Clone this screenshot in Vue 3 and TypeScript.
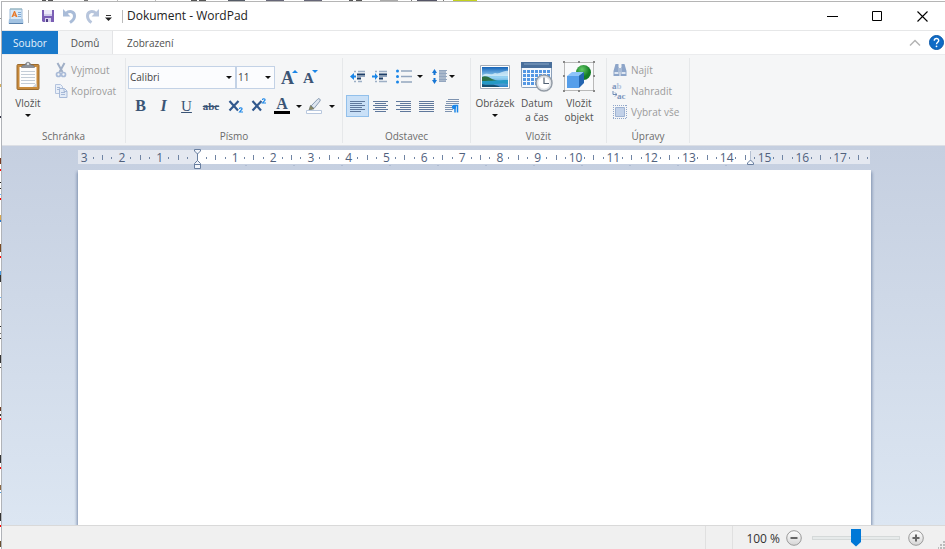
<script setup lang="ts">
import { ref } from 'vue'

interface Mark { x: number; label: string }

const CM = 37.8
const ORIGIN = 119.5
const TAB_STEP = 48

const numbers: Mark[] = []
const dots: number[] = []
const halves: number[] = []
for (let k = -3; k <= 17; k++) {
  const x = ORIGIN + k * CM
  if (k !== 0) numbers.push({ x, label: String(Math.abs(k)) })
  dots.push(x + CM * 0.25, x + CM * 0.75)
  halves.push(x + CM * 0.5)
}
const tabStops = Array.from({ length: 11 }, (_, i) => ORIGIN + (i + 1) * TAB_STEP)

const lines = [0, 1, 2, 3, 4, 5]
type Align = 'left' | 'center' | 'right' | 'justify'
const aligns: { id: Align; title: string; rows: [number, number][] }[] = [
  { id: 'left', title: 'Zarovnat vlevo', rows: [[0, 15], [0, 12], [0, 15], [0, 12], [0, 15], [0, 11]] },
  { id: 'center', title: 'Na střed', rows: [[0, 15], [2, 11], [0, 15], [2, 11], [0, 15], [2, 11]] },
  { id: 'right', title: 'Zarovnat vpravo', rows: [[0, 15], [4, 11], [0, 15], [4, 11], [0, 15], [4, 11]] },
  { id: 'justify', title: 'Do bloku', rows: [[0, 15], [0, 15], [0, 15], [0, 15], [0, 15], [0, 15]] },
]
const align = ref<Align>('left')
const zoom = ref(50)
const fontName = ref('Calibri')
const fontSize = ref('11')
const text = ref('')

const topBits = [
  { x: 42, w: 4, c: '#555' }, { x: 48, w: 5, c: '#555' }, { x: 84, w: 4, c: '#777' },
  { x: 117, w: 1, c: '#bbb' }, { x: 155, w: 1, c: '#bbb' }, { x: 191, w: 6, c: '#555' },
  { x: 199, w: 7, c: '#555' }, { x: 228, w: 17, c: '#555b66' }, { x: 266, w: 18, c: '#667' },
  { x: 304, w: 18, c: '#667' }, { x: 349, w: 4, c: '#555' }, { x: 356, w: 6, c: '#555' },
  { x: 380, w: 18, c: '#aaa' }, { x: 411, w: 1, c: '#777' }, { x: 417, w: 20, c: '#556' },
  { x: 443, w: 1, c: '#777' }, { x: 453, w: 24, c: '#c3d21d' },
]
const leftBits = [
  { y: 18, h: 1, c: '#999' }, { y: 84, h: 3, c: '#d9b25c' }, { y: 116, h: 2, c: '#334' },
  { y: 158, h: 6, c: '#7a3c22' }, { y: 169, h: 2, c: '#f00' }, { y: 182, h: 1, c: '#222' },
  { y: 188, h: 1, c: '#222' }, { y: 194, h: 1, c: '#6bb6ff' }, { y: 198, h: 2, c: '#f00' },
  { y: 215, h: 5, c: '#d8a850' }, { y: 220, h: 2, c: '#2a77c9' }, { y: 244, h: 8, c: '#7a4a22' },
  { y: 256, h: 2, c: '#f00' }, { y: 271, h: 4, c: '#4a9be0' }, { y: 275, h: 7, c: '#333' },
  { y: 297, h: 1, c: '#6bb6ff' }, { y: 309, h: 1, c: '#222' }, { y: 326, h: 1, c: '#222' },
  { y: 333, h: 1, c: '#777' }, { y: 338, h: 1, c: '#222' }, { y: 355, h: 8, c: '#333' },
  { y: 367, h: 1, c: '#555' }, { y: 407, h: 4, c: '#6a3a20' }, { y: 414, h: 2, c: '#333' },
  { y: 418, h: 2, c: '#f00' }, { y: 455, h: 8, c: '#333' }, { y: 467, h: 2, c: '#f00' },
  { y: 485, h: 5, c: '#8a6844' }, { y: 492, h: 1, c: '#4a9be0' }, { y: 513, h: 8, c: '#333' },
  { y: 525, h: 2, c: '#f00' }, { y: 541, h: 6, c: '#6a5030' },
]
</script>

<template>
  <div class="screen">
    <svg class="behind-top" height="1" aria-hidden="true">
      <rect v-for="b in topBits" :key="b.x" :x="b.x" y="0" :width="b.w" height="1" :fill="b.c" />
    </svg>
    <svg class="behind-left" width="1" aria-hidden="true">
      <rect v-for="b in leftBits" :key="b.y" x="0" :y="b.y - 1" width="1" :height="b.h" :fill="b.c" />
    </svg>

    <main class="window">
      <header class="titlebar">
        <svg class="app-icon" width="16" height="18" viewBox="0 0 16 18" aria-hidden="true">
          <path d="M2 2h12v12H2z" fill="#d8e9f8" stroke="#9dbbd9" />
          <path d="M3 1v2M5 1v2M7 1v2M9 1v2M11 1v2M13 1v2" stroke="#8aa" stroke-width=".8" />
          <path fill-rule="evenodd" d="M3.500 10 6 4h1l2.500 6H7.700l-.5-1.300H5.600L5.200 10zM6 7.500h1L6.500 6z" fill="#e8792b" />
          <path d="M10 5.500h3M10 7.500h3M10 9.500h3" stroke="#7aa7d6" />
          <path d="M1 12h14l.5 4.500H.5z" fill="#a3c3e2" />
          <path d="M1 16.500h14" stroke="#5982ad" />
        </svg>
        <i class="vr first"></i>
        <button class="qa" title="Uložit">
          <svg width="12" height="12" viewBox="0 0 12 12">
            <path d="M0 0h12v12H1l-1-1z" fill="#7b5fb5" />
            <path d="M2 0h8v6H2z" fill="#eceaf8" />
            <path d="M2 4h8v2H2z" fill="#cfcbea" />
            <path d="M3 8h6v4H3z" fill="#d9d4ee" /><path d="M4 9h2v3H4z" fill="#4f3d86" />
          </svg>
        </button>
        <button class="qa undo" title="Zpět">
          <svg width="14" height="16" viewBox="0 0 14 16">
            <path d="M3 5.500C6 2.500 11.500 3 11.500 8c0 3-2 5-4.500 6.500" fill="none" stroke="#a9bcd8" stroke-width="3" />
            <path d="M0 1v7.500h7.500z" fill="#a9bcd8" />
          </svg>
        </button>
        <button class="qa redo" title="Znovu">
          <svg width="14" height="16" viewBox="0 0 14 16">
            <path d="M11 5.500C8 2.500 2.500 3 2.500 8c0 3 1.500 5 4 6.500" fill="none" stroke="#b7c5dc" stroke-width="3" />
            <path d="M14 1v7.500H6.500z" fill="#b7c5dc" />
          </svg>
        </button>
        <button class="qa more" title="Přizpůsobit">
          <svg width="7" height="6" viewBox="0 0 7 6"><path d="M1 .5h5" stroke="#333" /><path d="M0 2.500h7L3.500 6z" fill="#222" /></svg>
        </button>
        <i class="vr second"></i>
        <h1>Dokument - WordPad</h1>
        <div class="caption-buttons">
          <button title="Minimalizovat"><svg width="11" height="11"><path d="M0 5.500h11" stroke="#000" /></svg></button>
          <button title="Maximalizovat"><svg width="11" height="11"><path d="M.5.5h9v9h-9z" fill="none" stroke="#000" /></svg></button>
          <button title="Zavřít"><svg width="11" height="11"><path d="m.5.5 10 10m0-10-10 10" stroke="#000" stroke-width="1.100" /></svg></button>
        </div>
      </header>

      <nav class="tabs">
        <button class="tab file">Soubor</button>
        <button class="tab active">Domů</button>
        <button class="tab view">Zobrazení</button>
        <span class="tabs-end">
          <button title="Minimalizovat pás karet"><svg width="12" height="8"><path d="m1 6.500 5-5 5 5" fill="none" stroke="#b4b4b4" stroke-width="1.500" /></svg></button>
          <button title="Nápověda">
            <svg width="15" height="15" viewBox="0 0 15 15">
              <circle cx="7.500" cy="7.500" r="7" fill="#0f6bc6" stroke="#0a58a8" />
              <path d="M5.300 5.700C5.300 2.800 9.800 2.900 9.700 5.600 9.600 7.200 7.500 7.300 7.500 9.300" fill="none" stroke="#fff" stroke-width="1.400" />
              <circle cx="7.500" cy="11.300" r=".9" fill="#fff" />
            </svg>
          </button>
        </span>
      </nav>

      <section class="ribbon" aria-label="Domů">
        <div class="group clipboard">
          <div class="body row">
            <button class="big paste">
              <svg width="26" height="31" viewBox="0 0 26 31">
                <rect x="2" y="3.500" width="22" height="25" rx="1" fill="#c98b3c" stroke="#9a6a2e" />
                <path d="M4.500 6h17v20h-17z" fill="#fdfdfd" />
                <path d="M6 10.500h14M6 13.500h14M6 16.500h14M6 19.500h14M6 22.500h14" stroke="#c3ccd6" />
                <path d="M17.500 26h4v-4z" fill="#ccd2da" />
                <path d="M6.500 6.500c0-3 3-2 4-3 0-3 5-3 5 0 1 1 4 0 4 3z" fill="#8d9299" stroke="#686d75" stroke-width=".6" />
                <circle cx="13" cy="3" r="1" fill="#f5f6f7" />
              </svg>
              <span>Vložit</span><i class="caret"></i>
            </button>
            <div class="stack">
              <button class="small" disabled>
                <svg width="14" height="16" viewBox="0 0 14 16">
                  <path d="M3.500 1 8.500 10M10.500 1 5.500 10" stroke="#a0afc6" stroke-width="2" />
                  <circle cx="4.500" cy="12.500" r="2" fill="none" stroke="#a9bbd8" stroke-width="1.700" />
                  <circle cx="9.500" cy="12.500" r="2" fill="none" stroke="#a9bbd8" stroke-width="1.700" />
                </svg>Vyjmout
              </button>
              <button class="small" disabled>
                <svg width="14" height="16" viewBox="0 0 14 16">
                  <path d="M1.500 1.500h5l2 2v7h-7z" fill="#e9eff8" stroke="#b4c4de" />
                  <path d="M5.500 5.500h5l2.500 2.500v6.500H5.500z" fill="#e3ebf6" stroke="#a6b9d8" />
                  <path d="M7 9.500h4M7 11.500h4M3 4.500h3M3 6.500h2" stroke="#a6b9d8" /><path d="M10 5.500v3h3" fill="none" stroke="#a6b9d8" />
                </svg>Kopírovat
              </button>
            </div>
          </div>
          <h2>Schránka</h2>
        </div>

        <div class="group font">
          <div class="body">
            <div class="row combos">
              <label class="combo name"><select v-model="fontName" aria-label="Písmo"><option>Calibri</option><option>Arial</option></select><i class="caret"></i></label>
              <label class="combo size"><select v-model="fontSize" aria-label="Velikost písma"><option>11</option><option>12</option></select><i class="caret"></i></label>
              <button class="glyph grow" title="Zvětšit písmo">A<svg width="6" height="3"><path d="M0 3 3 0l3 3z" fill="#1a86e8" /></svg></button>
              <button class="glyph shrink" title="Zmenšit písmo">A<svg width="6" height="3"><path d="M0 0h6L3 3z" fill="#1a86e8" /></svg></button>
            </div>
            <div class="row styles">
              <button class="glyph bold" title="Tučné">B</button>
              <button class="glyph italic" title="Kurzíva">I</button>
              <button class="glyph under" title="Podtržené">U</button>
              <button class="glyph strike" title="Přeškrtnuté">abc</button>
              <button class="glyph" title="Dolní index">
                <svg width="16" height="16" viewBox="0 0 16 16"><path d="m1.500 3 8.500 9.500M10.500 3l-9 9.500" stroke="#31588d" stroke-width="2.200" /><path d="M11.500 11c0-1.800 3-1.500 2.500 0-.3 1-1.500 1.500-2.500 3h3.500" fill="none" stroke="#1a86e8" stroke-width="1.200" /></svg>
              </button>
              <button class="glyph" title="Horní index">
                <svg width="16" height="16" viewBox="0 0 16 16"><path d="m1.500 3 8.500 9.500M10.500 3l-9 9.500" stroke="#31588d" stroke-width="2.200" /><path d="M11.500 2c0-1.800 3-1.500 2.500 0-.3 1-1.500 1.500-2.500 3h3.500" fill="none" stroke="#1a86e8" stroke-width="1.200" /></svg>
              </button>
              <button class="glyph split color" title="Barva textu">
                <span class="ink">A</span><i class="caret"></i>
              </button>
              <button class="glyph split" title="Barva zvýraznění textu">
                <svg width="17" height="16" viewBox="0 0 17 16">
                  <path d="M5 8 12 .8c1-.8 3 .8 2 2.200L8 10.500z" fill="#dde5ef" stroke="#7f93ad" stroke-width=".9" />
                  <path d="M4.500 7.500 8 10.800 3 12z" fill="#8a8a62" stroke="#6d7569" stroke-width=".7" />
                  <path d="M.5 12.500h15v3H.5z" fill="#fff" stroke="#b9c8de" />
                </svg><i class="caret"></i>
              </button>
            </div>
          </div>
          <h2>Písmo</h2>
        </div>

        <div class="group paragraph">
          <div class="body">
            <div class="row para-top">
              <button title="Zmenšit odsazení">
                <svg width="16" height="13" viewBox="0 0 16 13"><path d="M4 1.500h2M8 1.500h7M4 11.500h2M8 11.500h4" stroke="#9dafc5" stroke-width="1.500" /><path d="M7 4.500h8M7 8.500h4" stroke="#1d3e68" stroke-width="2" /><path d="M7 6.500h8" stroke="#8fa4c0" /><path d="M0 6.500 4 3v2.500h2v2H4V10z" fill="#1a86e8" /></svg>
              </button>
              <button title="Zvětšit odsazení">
                <svg width="16" height="13" viewBox="0 0 16 13"><path d="M3 1.500h2M7 1.500h8M3 11.500h2M7 11.500h8" stroke="#9dafc5" stroke-width="1.500" /><path d="M7 4.500h8M7 8.500h4" stroke="#1d3e68" stroke-width="2" /><path d="M7 6.500h8" stroke="#8fa4c0" /><path d="M6 6.500 3 3v2.500H0v2h3V10z" fill="#1a86e8" /></svg>
              </button>
              <button class="list" title="Spustit seznam">
                <svg width="16" height="15" viewBox="0 0 16 15"><path d="M5 2h11M5 7.500h11M5 13h11" stroke="#93a6bf" stroke-width="1.500" /><g fill="#1a86e8"><circle cx="1.500" cy="2" r="1.500" /><circle cx="1.500" cy="7.500" r="1.500" /><circle cx="1.500" cy="13" r="1.500" /></g></svg><i class="caret"></i>
              </button>
              <button class="spacing" title="Řádkování">
                <svg width="15" height="15" viewBox="0 0 15 15"><path d="M7 1h7v12H7z" fill="#a9b8cb" /><path d="M7 1.500h8M7 4.500h8M7 7.500h8M7 10.500h8M7 12.500h7" stroke="#93a6bf" /><path d="M2.500 0 5 4H3.500v2h-2V4H0zM2.500 15 0 11h1.500V9h2v2H5z" fill="#1876d4" /></svg><i class="caret"></i>
              </button>
            </div>
            <div class="row para-bottom">
              <button v-for="a in aligns" :key="a.id" :title="a.title" :class="['align', { on: align === a.id }]" @click="align = a.id">
                <svg width="15" height="11" viewBox="0 0 15 11"><rect v-for="i in lines" :key="i" :x="a.rows[i][0]" :y="i * 2" :width="a.rows[i][1]" height="1" fill="#5f789c" /></svg>
              </button>
              <button class="align marks-button" title="Odstavec">
                <svg width="16" height="14" viewBox="0 0 16 14"><path d="M4 .5h11M2 2.500h13M2 4.500h13M1 6.500h7M1 8.500h7M1 10.500h8M1 12.500h7" stroke="#7e93b0" /><path d="M13.500 13.500V6.500h-3M11 13.500v-7" fill="none" stroke="#1a86e8" stroke-width="1.500" /><circle cx="10" cy="8" r="2.200" fill="#1a86e8" /></svg>
              </button>
            </div>
          </div>
          <h2>Odstavec</h2>
        </div>

        <div class="group insert">
          <div class="body row">
            <button class="big">
              <svg width="32" height="31" viewBox="0 0 32 31">
                <defs><linearGradient id="sky" x2="0" y2="1"><stop offset="0" stop-color="#1563b8" /><stop offset=".5" stop-color="#9bd6f5" /><stop offset="1" stop-color="#2b82c6" /></linearGradient></defs>
                <path d="M1.500 4.500h29v23h-29z" fill="#fff" stroke="#a5adb8" />
                <path d="M3 6h26v20H3z" fill="url(#sky)" />
                <path d="M4 14c5-3 7 1 12-2 4 2 9-3 13-2v5H3z" fill="#e3f5fc" opacity=".7" />
                <path d="M3 16c4-2 8 1 10 2l6 2H3z" fill="#2c7044" />
                <path d="M3 20c9 0 15-1 26-1v4c-8-2-16 2-26 0z" fill="#2499c5" />
                <path d="M3 23c7 2 12-1 18 3H3z" fill="#144f72" />
              </svg>
              <span>Obrázek</span><i class="caret"></i>
            </button>
            <button class="big">
              <svg width="34" height="31" viewBox="0 0 34 31">
                <rect x="1.500" y="1.500" width="30" height="25" rx="1" fill="#f5f9fd" stroke="#8ba0ba" />
                <path d="M1 1h31v6H1z" fill="#496f9b" /><path d="M4 3h25" stroke="#87a5c5" />
                <g fill="#5497e3"><template v-for="r in 4" :key="r"><rect v-for="c in 7" :key="c" :x="c * 4 - 1" :y="r * 4 + 5" width="3" height="3" /></template></g>
                <circle cx="24" cy="22" r="8" fill="#eef1f4" stroke="#949ca6" stroke-width="1.500" />
                <circle cx="24" cy="22" r="6.300" fill="#fff" stroke="#c6ccd3" stroke-width=".7" />
                <path d="M24 16.500v6h5" fill="none" stroke="#516173" stroke-width="1.200" />
              </svg>
              <span>Datum<br>a čas</span>
            </button>
            <button class="big">
              <svg width="32" height="31" viewBox="0 0 32 31">
                <defs><radialGradient id="ball" cx=".4" cy=".3"><stop offset="0" stop-color="#66cc69" /><stop offset="1" stop-color="#137d25" /></radialGradient></defs>
                <path d="M1.500 1.500h29v28h-29z" fill="#f9fafb" stroke="#b9b9b9" />
                <g fill="#888"><path d="M0 0h2v2H0zM30 0h2v2h-2zM0 29h2v2H0zM30 29h2v2h-2zM15 0h2v2h-2zM15 29h2v2h-2zM0 14h2v2H0zM30 14h2v2h-2z" /></g>
                <circle cx="20.500" cy="11.500" r="7.500" fill="url(#ball)" />
                <path d="M4 15h12v12H4z" fill="#559eea" /><path d="m4 15 5-4h12l-5 4z" fill="#8dc4fa" /><path d="m16 15 5-4v11l-5 5z" fill="#2465b1" />
              </svg>
              <span>Vložit<br>objekt</span>
            </button>
          </div>
          <h2>Vložit</h2>
        </div>

        <div class="group edit">
          <div class="body stack">
            <button class="small" disabled>
              <svg width="16" height="16" viewBox="0 0 16 16">
                <path d="M3.500 2h3v3l1 2v7h-6V9zM9.500 2h3l2 7v5h-6V7l1-2z" fill="#8da5c9" /><path d="M6 6h4v4H6z" fill="#a9bbd6" /><path d="M2.500 11h4M9.500 11h4" stroke="#dfe7f2" stroke-width="2" />
              </svg>Najít
            </button>
            <button class="small" disabled>
              <span class="replace" aria-hidden="true"><b>a<em>b</em></b><b><svg width="5" height="6"><path d="M1 0v3.500h4M3 1.500l2 2-2 2" fill="none" stroke="#6f8bb5" /></svg>ac</b></span>Nahradit
            </button>
            <button class="small" disabled>
              <svg width="16" height="16" viewBox="0 0 16 16">
                <path d="M1 1.500h14M1 14.500h14M1.500 1v14M14.500 1v14" stroke="#90a6ca" stroke-dasharray="1 1" /><path d="M3.500 3.500h9v9h-9z" fill="#c2d1e8" stroke="#9fb3d3" />
              </svg>Vybrat vše
            </button>
          </div>
          <h2>Úpravy</h2>
        </div>
      </section>

      <section class="workspace">
        <svg class="ruler" height="22" role="img" aria-label="Pravítko">
          <rect x="0" y="2" width="100%" height="14" fill="#e4e8f0" />
          <rect :x="ORIGIN" y="2" width="553" height="14" fill="#fff" />
          <g class="marks">
            <rect v-for="d in dots" :key="d" :x="Math.round(d) - 1" y="9" width="1" height="2" fill="#7084a3" />
            <rect v-for="h in halves" :key="h" :x="Math.round(h) - 1" y="7" width="1" height="5" fill="#7084a3" />
            <text v-for="n in numbers" :key="n.x" :x="n.x" y="14" text-anchor="middle">{{ n.label }}</text>
            <rect v-for="t in tabStops" :key="t" :x="t" y="17" width="1" height="1" fill="#9aa9c2" />
          </g>
          <g fill="#f3f6fb" stroke="#687e9f">
            <path d="M119.500 5v9" />
            <path d="M116.500 1.500h6v1.500l-3 3-3-3z" />
            <path d="M116.500 20.500v-5l3-3 3 3v5zM116.500 16.500h6" />
            <path d="M672.500 3v10" stroke="#b5c0d2" />
            <path d="M669.500 16.500v-1.500l3-3 3 3v1.500z" />
          </g>
        </svg>
        <textarea v-model="text" class="page" aria-label="Dokument" spellcheck="false"></textarea>
      </section>

      <footer class="status">
        <i class="cell"></i>
        <div class="zoom">
          <output>100 %</output>
          <button title="Oddálit"><svg width="16" height="16"><use href="#knob" /><path d="M4.500 8h7" stroke="#666" stroke-width="2" /></svg></button>
          <input v-model.number="zoom" type="range" min="0" max="100" aria-label="Lupa">
          <button title="Přiblížit"><svg width="16" height="16"><use href="#knob" /><path d="M4.500 8h7M8 4.500v7" stroke="#666" stroke-width="2" /></svg></button>
        </div>
        <svg class="grip" width="7" height="8" aria-hidden="true">
          <defs>
            <linearGradient id="steel" x2="0" y2="1"><stop offset="0" stop-color="#fff" /><stop offset="1" stop-color="#d5d5d5" /></linearGradient>
            <circle id="knob" cx="8" cy="8" r="7.300" fill="url(#steel)" stroke="#9a9a9a" />
          </defs>
          <path d="M5 0h2v2H5zM2 3h2v2H2zM5 3h2v2H5zM0 6h1v2H0zM2 6h2v2H2zM5 6h2v2H5z" fill="#bcbcbc" />
        </svg>
      </footer>
    </main>
  </div>
</template>

<style>
body { margin: 0; background: #fff; }
</style>

<style scoped>
* { box-sizing: border-box; }
.screen {
  display: grid;
  grid-template: 1px 1fr / 1px 1fr;
  height: 100vh;
  overflow: hidden;
  font: 10px/14px "Open Sans", "Noto Sans", sans-serif;
  color: #505050;
}
.behind-top { grid-column: 1 / 3; width: 100%; }
.behind-left { height: 100%; }
svg { display: block; flex: none; }
button { border: 0; padding: 0; background: none; font: inherit; color: inherit; display: flex; align-items: center; justify-content: center; }
.window { display: flex; flex-direction: column; min-width: 0; border-left: 1px solid #b0b3b8; border-top: 1px solid #b5b5b5; background: #fff; }
.titlebar { display: flex; align-items: center; height: 29px; padding-left: 6px; border-bottom: 1px solid #e6e7e8; }
.vr { width: 1px; height: 13px; background: #bbb; }
.first { margin: 0 13px 0 4px; }
.second { margin: 0 4px 0 10px; }
.qa.undo { margin-left: 9px; }
.qa.redo { margin-left: 8px; }
.qa.more { margin-left: 6px; padding-top: 4px; }
h1 { margin: 0; font-size: 12px; line-height: 16px; font-weight: 400; color: #222; }
.caption-buttons { display: flex; margin-left: auto; height: 100%; }
.caption-buttons button { width: 45px; }

.tabs { display: flex; height: 23px; flex: none; }
.tab { padding: 0 14px; }
.file { width: 56px; padding: 0; background: #1979ca; color: #e6f1fb; }
.active { width: 55px; padding: 0; background: #f5f6f7; border-right: 1px solid #e3e4e6; }
.tabs-end { display: flex; gap: 8px; margin-left: auto; padding-right: 1px; }

.ribbon { display: flex; height: 92px; flex: none; padding: 3px 0 2px; background: #f5f6f7; border-top: 1px solid #ebecee; border-bottom: 1px solid #dcdfe5; }
.group { display: flex; flex-direction: column; justify-content: space-between; border-right: 1px solid #e6e8ea; }
h2 { margin: 0; font-size: 10px; line-height: 14px; font-weight: 400; text-align: center; color: #6b6b6b; }
.row { display: flex; }
.clipboard { width: 124px; }
.font { width: 217px; }
.paragraph { width: 128px; }
.insert { width: 136px; }
.edit { width: 83px; }
.font .body { padding-left: 2px; }
.paragraph .body, .insert .body { padding-left: 3px; }
.edit .body { padding-left: 5px; }
.big { flex-direction: column; justify-content: flex-start; width: 42px; padding-top: 3px; }
.big span { white-space: nowrap; line-height: 14px; margin-top: 4px; }
.paste { width: 52px; }
.caret { width: 0; height: 0; border: 3px solid transparent; border-top-color: #111; border-bottom: 0; flex: none; }
.big .caret { margin-top: 4px; }
.stack { display: flex; flex-direction: column; align-items: flex-start; padding-top: 1px; }
.small { height: 21px; gap: 3px; color: #9b9b9b; white-space: nowrap; }

.combos { padding-top: 8px; height: 31px; }
.combo { display: grid; align-items: center; }
.combo select { grid-area: 1 / 1; appearance: none; width: 100%; height: 23px; padding: 0 12px 2px 1px; border: 1px solid #c3d2e6; border-radius: 0; background: #fbfcfe; font: inherit; color: #444; }
.combo .caret { grid-area: 1 / 1; justify-self: end; margin-right: 4px; pointer-events: none; }
.name { width: 108px; }
.size { width: 39px; }
.glyph { font-family: "Liberation Serif", serif; color: #3a5475; height: 22px; width: 23px; font-weight: 700; font-size: 16px; line-height: 22px; }
.grow, .shrink { align-items: flex-start; font-size: 18px; line-height: 24px; }
.grow { margin-left: 3px; }
.shrink { font-size: 15px; margin-left: -2px; }
.grow svg, .shrink svg { margin: 4px 0 0 -2px; }
.styles { padding: 6px 0 0 1px; }
.italic { font-style: italic; }
.under { font-weight: 400; font-size: 15px; text-decoration: underline; }
.strike { width: 26px; font-size: 11px; text-decoration: line-through; }
.split { width: 32px; gap: 6px; }
.color { margin-left: 2px; }
.ink { height: 16px; line-height: 12px; padding: 0 2px; border-bottom: 3px solid #000; }

.para-top { padding: 6px 0 0 4px; gap: 6px; height: 31px; align-items: center; }
.para-top button { height: 20px; }
.list, .spacing { gap: 5px; }
.list { margin-left: 2px; }
.spacing { margin-left: 3px; gap: 2px; }
.para-bottom { padding-top: 6px; }
.align { width: 23px; height: 22px; border: 1px solid transparent; }
.align.on { background: #c9e0f7; border-color: #92c0eb; }
.marks-button { margin-left: 2px; }
.replace { width: 16px; font: 700 9px/10px "Liberation Serif", serif; color: #7c95bd; }
.replace b { display: flex; }
.replace em { font-style: normal; color: #b6c5dd; }

.workspace { flex: 1; min-height: 0; display: flex; flex-direction: column; padding: 2px 74px 0 76px; background: linear-gradient(#c5cfe0, #dce6f2); overflow: hidden; }
.ruler { width: calc(100% - 1px); }
.marks text { font: 12px "Open Sans", "Noto Sans", sans-serif; fill: #50617d; }
.page { flex: 1; min-height: 0; width: 100%; border: 0; outline: 0; padding: 40px 119px; resize: none; background: #fff; box-shadow: 1px 2px 3px #8496b3, -1px 2px 3px #8496b3; font: 15px Lato, sans-serif; clip-path: inset(0 -4px); }

.status { display: flex; height: 24px; flex: none; background: #f0f0f0; border-top: 1px solid #d9d9d9; }
.cell { margin-left: auto; width: 28px; border: solid #e0e0e0; border-width: 0 1px; }
.zoom { display: flex; align-items: center; padding-left: 13px; gap: 6px; }
output { font-size: 12px; line-height: 16px; color: #333; padding-top: 3px; white-space: nowrap; }
input[type="range"] { appearance: none; width: 88px; height: 20px; margin: 0 2px 0 4px; background: none; }
input::-webkit-slider-runnable-track { height: 4px; background: #e6eaea; border: 1px solid #d5d9d9; }
input::-webkit-slider-thumb { appearance: none; width: 10px; height: 18px; margin-top: -8px; background: #0078d7; clip-path: polygon(0 0, 100% 0, 100% 75%, 50% 100%, 0 75%); }
.grip { align-self: flex-end; margin-left: 14px; }
</style>
